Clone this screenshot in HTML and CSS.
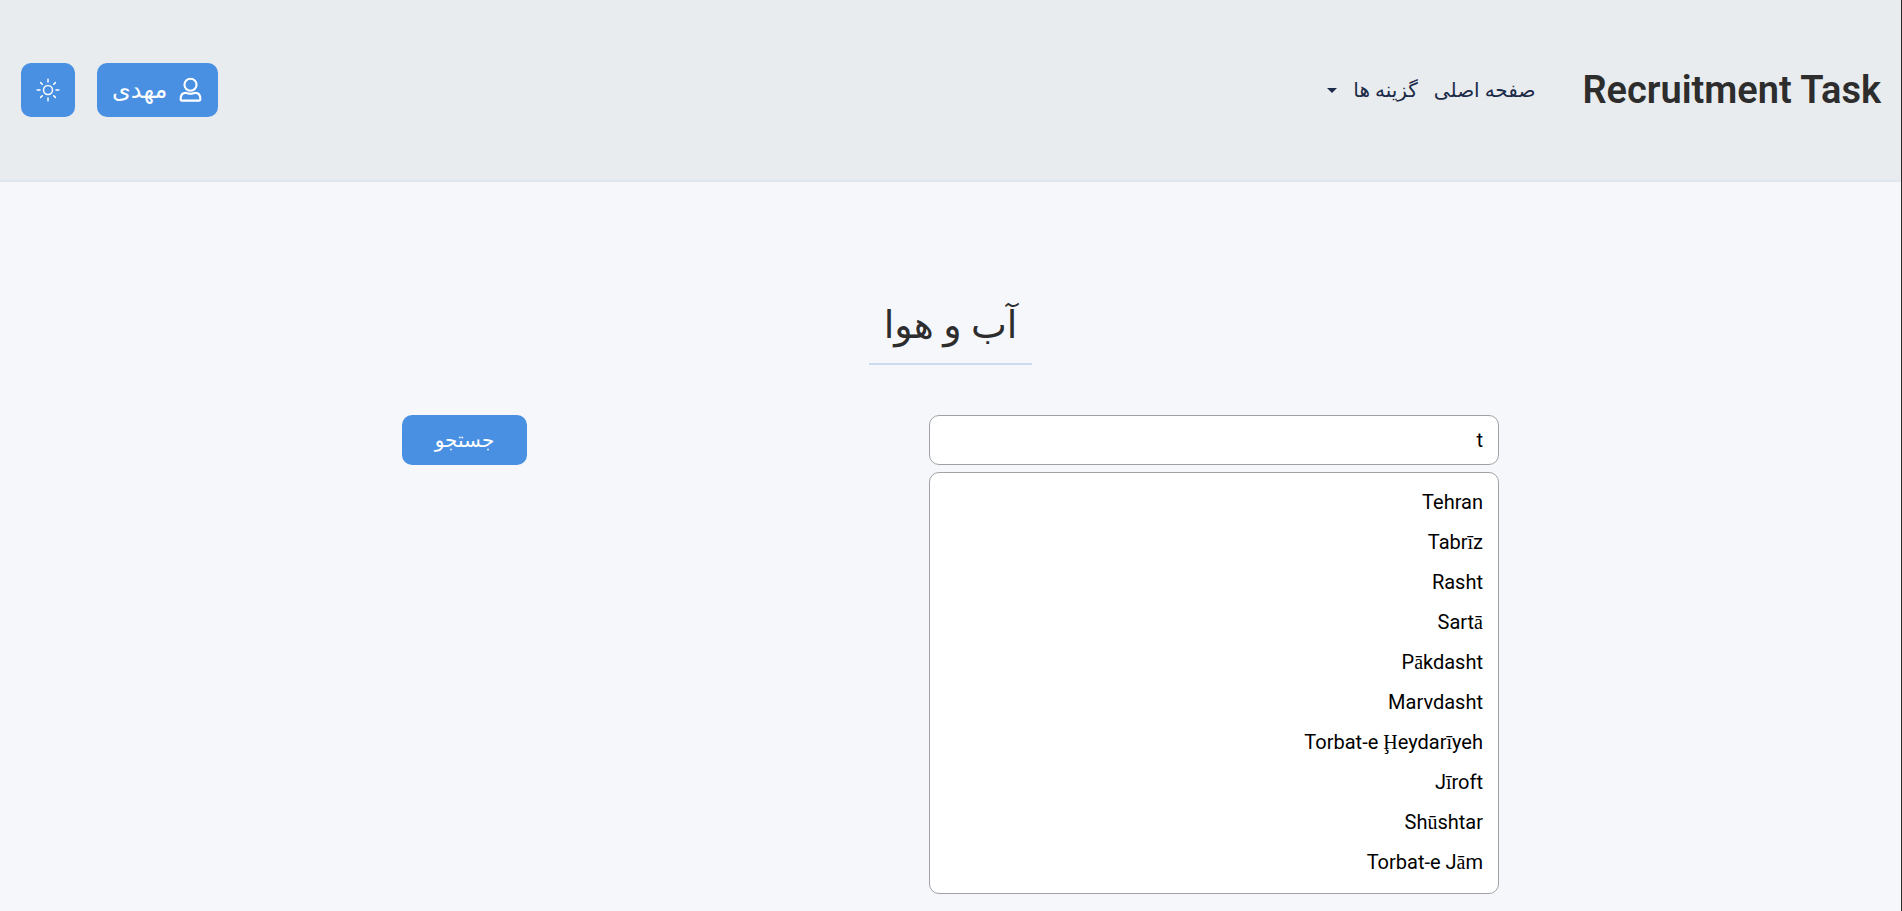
FILE: index.html
```html
<!DOCTYPE html>
<html lang="fa" dir="rtl">
<head>
<meta charset="utf-8">
<title>Recruitment Task</title>
<link rel="stylesheet" href="styles.css">
</head>
<body>
<header class="header">
  <div class="header-start">
    <h1 class="brand">Recruitment Task</h1>
    <nav class="nav">
      <a class="nav-link" href="#">صفحه اصلی</a>
      <a class="nav-link nav-toggle" href="#">گزینه ها<span class="caret"></span></a>
    </nav>
  </div>
  <div class="header-actions">
    <button class="button user-button" type="button">
      <svg class="user-icon" viewBox="0 0 24 26" fill="none" stroke="currentColor" stroke-width="2.2" aria-hidden="true">
        <circle cx="12" cy="7.500" r="6.300"/>
        <path d="M7 16C3.500 16 1.700 18.800 1.700 22.600c0 1 .6 1.500 1.600 1.500h17.400c1 0 1.600-.5 1.600-1.500C22.300 18.800 20.500 16 17 16c-1.500 0-2.400.9-5 .9S8.500 16 7 16z"/>
      </svg>
      مهدی
    </button>
    <button class="button theme-button" type="button" aria-label="تغییر پوسته">
      <svg class="sun-icon" viewBox="0 0 24 24" fill="none" stroke="currentColor" stroke-width="1.500" stroke-linecap="round" aria-hidden="true">
        <circle cx="12" cy="12" r="4.500"/>
        <path d="M12 1.200v2.800M12 20v2.800M1.200 12H4M20 12h2.800M4.600 4.600l1.700 1.700M17.700 17.700l1.700 1.700M4.600 19.400l1.700-1.700M17.700 6.300l1.700-1.700"/>
      </svg>
    </button>
  </div>
</header>
<main class="main">
  <h2 class="title">آب و هوا</h2>
  <form class="search">
    <div class="field">
      <input class="input" type="text" value="t" aria-label="نام شهر">
      <ul class="options">
        <li class="option">Tehran</li>
        <li class="option">Tabr<span class="accent">ī</span>z</li>
        <li class="option">Rasht</li>
        <li class="option">Sart<span class="accent">ā</span></li>
        <li class="option">P<span class="accent">ā</span>kdasht</li>
        <li class="option">Marvdasht</li>
        <li class="option">Torbat-e <span class="accent">Ḩ</span>eydar<span class="accent">ī</span>yeh</li>
        <li class="option">J<span class="accent">ī</span>roft</li>
        <li class="option">Sh<span class="accent">ū</span>shtar</li>
        <li class="option">Torbat-e J<span class="accent">ā</span>m</li>
      </ul>
    </div>
    <button class="button search-button" type="button">جستجو</button>
  </form>
</main>
</body>
</html>
```
FILE: styles.css
```css
* {
  box-sizing: border-box;
}

body {
  margin: 0;
  min-height: 100vh;
  border-right: 1px solid #2b2b2b;
  background: #f5f7fb;
  color: #2d2d2d;
  font-family: Roboto, "DejaVu Sans", sans-serif;
  font-size: 20px;
}

.header {
  display: flex;
  align-items: center;
  justify-content: space-between;
  padding: 60px 20px 60px 21px;
  border-bottom: 2px solid #dfe6ed;
  background: #e8ecef;
}

.header-start {
  display: flex;
  align-items: center;
  gap: 47px;
}

.brand {
  margin: 0;
  font-size: 38px;
  font-weight: 600;
  line-height: 60px;
}

.nav {
  display: flex;
  gap: 16px;
}

.nav-link {
  display: flex;
  align-items: center;
  color: #1c2b48;
  font-size: 20px;
  line-height: 28px;
  text-decoration: none;
}

.caret {
  margin-right: 16px;
  border: 5px solid transparent;
  border-top-color: currentColor;
  border-bottom: 0;
}

.header-actions {
  display: flex;
  gap: 22px;
}

.button {
  display: flex;
  align-items: center;
  justify-content: center;
  border: 0;
  border-radius: 10px;
  background: #4990e2;
  color: #fff;
  font-family: inherit;
}

.user-button {
  gap: 12px;
  height: 54px;
  padding: 0 16px 0 15px;
  font-size: 24px;
}

.user-icon {
  width: 23px;
  height: 26px;
}

.theme-button {
  width: 54px;
  height: 54px;
  padding: 0;
}

.sun-icon {
  width: 24px;
  height: 24px;
}

.main {
  display: flex;
  flex-direction: column;
  align-items: center;
  padding: 120px 20px 16px;
}

.title {
  margin: 0 0 50px;
  padding: 0 15px 14px;
  border-bottom: 2px solid #cbdcf0;
  font-size: 38px;
  font-weight: 400;
  line-height: 47px;
}

.search {
  display: flex;
  align-items: flex-start;
  justify-content: space-between;
  width: 100%;
  max-width: 1097px;
}

.field {
  width: 52%;
}

.input {
  display: block;
  width: 100%;
  height: 50px;
  padding: 0 15px 1px;
  border: 1px solid #a0a2a5;
  border-radius: 10px;
  background: #fff;
  color: #000;
  font-family: inherit;
  font-size: 20px;
}

.options {
  margin: 7px 0 0;
  padding: 9px 15px 11px;
  border: 1px solid #a0a2a5;
  border-radius: 10px;
  background: #fff;
  color: #000;
  list-style: none;
}

.option {
  line-height: 40px;
}

.accent {
  font-family: "Liberation Serif", serif;
  line-height: 1;
}

.search-button {
  width: 125px;
  height: 50px;
  padding: 0;
  font-size: 20px;
}
```
